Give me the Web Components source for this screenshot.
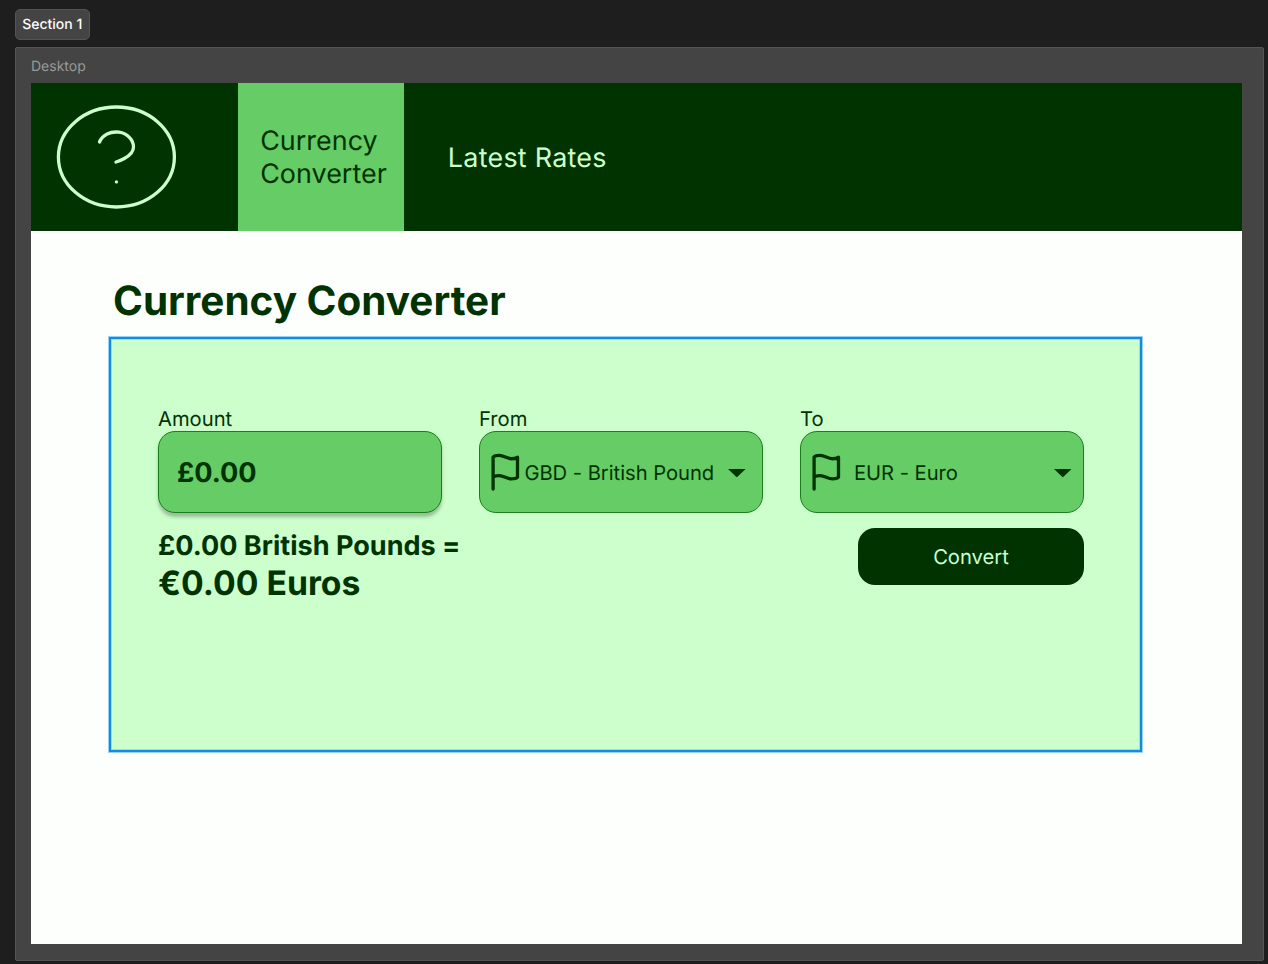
<!DOCTYPE html>
<html lang="en">
<head>
<meta charset="utf-8">
<title>Currency Converter</title>
<style>
html, body { margin: 0; height: 100%; overflow: hidden; background: #1e1e1e; }
body { font-family: Inter, "Liberation Sans", sans-serif; text-rendering: geometricPrecision; }
</style>
</head>
<body>
<design-canvas>
  <span slot="badge">Section 1</span>
  <span slot="label">Desktop</span>
  <nav-bar>
    <nav-tab active>Currency<br>Converter</nav-tab>
    <nav-tab>Latest Rates</nav-tab>
  </nav-bar>
  <converter-panel></converter-panel>
</design-canvas>
<script>
function define(name, html) {
  const template = document.createElement('template');
  template.innerHTML = html;
  customElements.define(name, class extends HTMLElement {
    constructor() {
      super();
      this.attachShadow({ mode: 'open' }).append(template.content.cloneNode(true));
    }
  });
}

define('design-canvas', `
<style>
:host { display: flex; flex-direction: column; align-items: flex-start; box-sizing: border-box; width: 1268px; height: 964px; padding: 9px 4px 3px 15px; background: #1e1e1e; }
.badge { box-sizing: border-box; width: 75px; height: 31px; padding: 0 .6px 1px 0; display: flex; align-items: center; justify-content: center; border: 1px solid #545454; border-radius: 5px; background: #444; color: #fff; font-size: 14px; font-weight: 500; white-space: nowrap; }
.section { box-sizing: border-box; margin-top: 7px; width: 1249px; height: 914px; border: 1px solid #555; border-radius: 2px; background: #444; padding: 0 0 0 15px; }
.label { height: 35px; line-height: 37px; font-size: 14px; color: #999; }
.frame { width: 1210.6px; height: 860.7px; background: #fdfffc; }
</style>
<div class="badge"><slot name="badge"></slot></div>
<div class="section">
  <div class="label"><slot name="label"></slot></div>
  <div class="frame"><slot></slot></div>
</div>`);

define('nav-bar', `
<style>
:host { display: flex; height: 147.7px; background: #003300; }
.logo { width: 206.7px; }
svg { display: block; margin: 13.7px 0 0 16px; overflow: visible; }
</style>
<div class="logo">
  <svg width="140" height="120" viewBox="0 0 140 120" fill="none" stroke="#ccffcc" stroke-width="3.3" stroke-linecap="round" stroke-linejoin="round">
    <ellipse cx="69.4" cy="60" rx="58" ry="50"/>
    <path transform="translate(-.5 0)" d="M53 45a17.5 15 0 0 1 34 5c0 10-17.5 15-17.5 15"/>
    <path d="M69.4 84.9h.06"/>
  </svg>
</div>
<slot></slot>`);

define('nav-tab', `
<style>
:host { display: flex; align-items: center; box-sizing: border-box; width: 300px; padding: 3px 0 0 43.3px; color: #ccffcc; font-size: 26.9px; line-height: 33px; font-weight: 400; letter-spacing: .27px; white-space: nowrap; }
:host([active]) { width: 166.8px; padding: 2px 0 0 22.5px; letter-spacing: .03px; background: #66cc66; color: #003300; }
</style>
<div><slot></slot></div>`);

define('flag-icon', `
<style>:host { display: block; width: 36.6px; height: 40.4px; } svg { display: block; }</style>
<svg width="36.6" height="40.4" viewBox="0 0 24 24" preserveAspectRatio="none" fill="none" stroke="#003300" stroke-width="3.3" stroke-linecap="round" stroke-linejoin="round">
  <path vector-effect="non-scaling-stroke" d="M4 15s1-1 4-1 5 2 8 2 4-1 4-1V3s-1 1-4 1-5-2-8-2-4 1-4 1zM4 22v-7"/>
</svg>`);

define('form-field', `
<style>
:host { display: block; width: 284px; color: #003300; font-weight: 400; font-size: 20.2px; white-space: nowrap; }
.label { height: 24.6px; line-height: 25.4px; }
.box { box-sizing: border-box; height: 82.4px; border: 1px solid #198019; border-radius: 17px; background: #66cc66; display: flex; align-items: center; }
:host([raised]) .box { box-shadow: 0 3.4px 3.4px rgba(0,0,0,.25); }
</style>
<div class="label"><slot name="label"></slot></div>
<div class="box"><slot></slot></div>`);

define('select-value', `
<style>
:host { display: flex; align-items: center; flex: 1; padding-left: 7.3px; }
.text { margin-left: var(--indent, .5px); letter-spacing: -.03px; }
svg { display: block; margin-left: auto; margin-right: var(--caret-end, 16px); }
.caret { position: relative; top: 1px; }
</style>
<flag-icon></flag-icon>
<div class="text"><slot></slot></div>
<svg class="caret" width="17.6" height="8.4" viewBox="0 0 17.6 8.4"><path fill="#003300" d="M0 0h17.6l-8.8 8.4z"/></svg>`);

define('converter-panel', `
<style>
:host { display: block; color: #003300; padding: 0 0 0 78px; }
h1 { margin: 0; height: 106.3px; box-sizing: border-box; padding: 45px 0 0 4px; font-size: 40.45px; line-height: 49px; font-weight: 700; white-space: nowrap; }
.panel { box-sizing: border-box; width: 1033px; height: 415px; border: 2px solid #0d8ce9; box-shadow: 0 0 0 1px rgba(13,140,233,.4), inset 0 0 0 1px rgba(13,140,233,.25); background: #ccffcc; padding: 67.4px 0 0 47px; }
.fields { display: flex; gap: 37px; }
.amount { margin: 1px 0 0 18px; font-size: 27.1px; font-weight: 700; }
.bottom { display: flex; justify-content: space-between; align-items: flex-start; width: 926px; margin-top: 15px; }
.result { font-weight: 700; white-space: nowrap; padding-top: 1px; }
.small { font-size: 27.05px; line-height: 33px; }
.big { font-size: 33.7px; line-height: 43px; }
button { width: 226px; height: 57px; border: 0; border-radius: 17px; background: #003300; color: #ccffcc; font: 400 20.2px Inter, sans-serif; text-rendering: inherit; padding: 0 0 1px; }
</style>
<h1>Currency Converter</h1>
<div class="panel">
  <div class="fields">
    <form-field raised><span slot="label">Amount</span><span class="amount">£0.00</span></form-field>
    <form-field><span slot="label">From</span><select-value>GBD - British Pound</select-value></form-field>
    <form-field><span slot="label">To</span><select-value style="--indent:9.1px;--caret-end:11.8px">EUR - Euro</select-value></form-field>
  </div>
  <div class="bottom">
    <div class="result"><div class="small">£0.00 British Pounds =</div><div class="big">€0.00 Euros</div></div>
    <button>Convert</button>
  </div>
</div>`);
</script>
</body>
</html>
